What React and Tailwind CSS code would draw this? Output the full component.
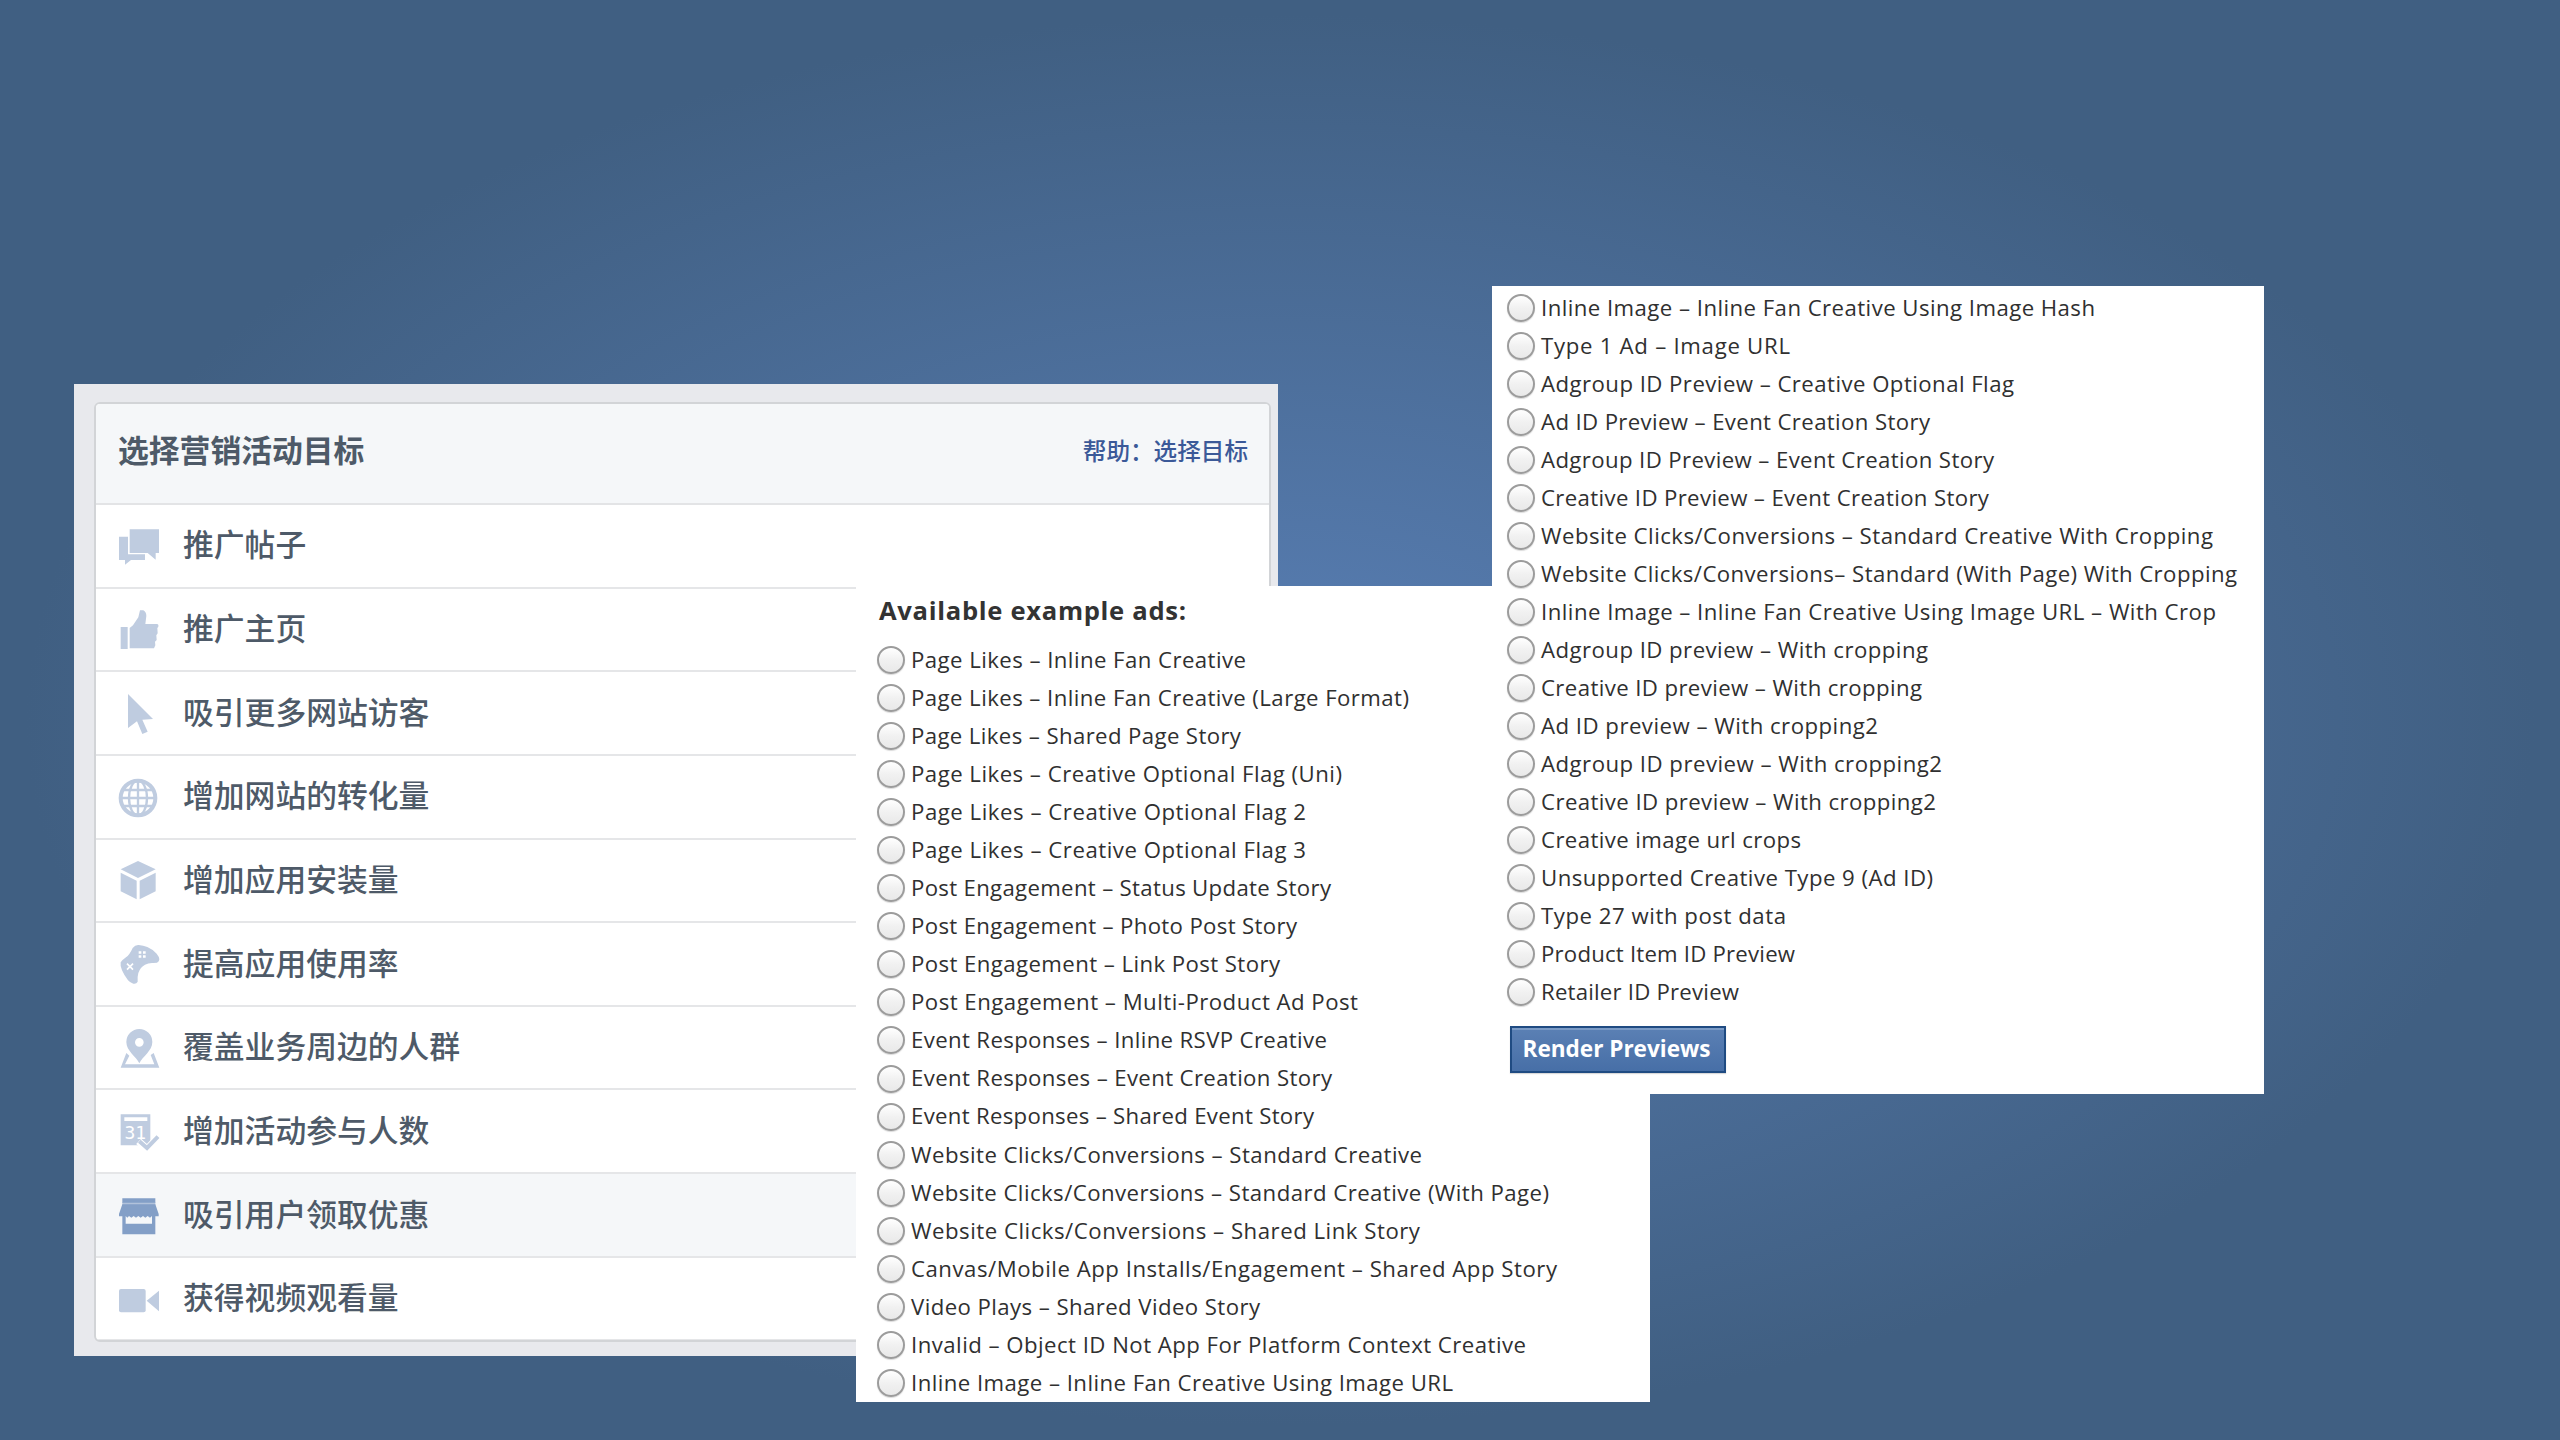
import { useLayoutEffect, useRef, useState } from "react";

/* Text tracked out so that its line is exactly `w` pixels wide. */
function Fit({ w, children }) {
  const ref = useRef(null);
  const [spacing, setSpacing] = useState(0);
  useLayoutEffect(() => {
    const natural = ref.current.getBoundingClientRect().width;
    setSpacing((w - natural) / (children.length - 1));
  }, []);
  return (
    <span ref={ref} className="whitespace-pre" style={{ letterSpacing: spacing }}>
      {children}
    </span>
  );
}

const icons = {
  posts: (
    <>
      <path d="M3 35H30V88H81V105H39L21 119V105H3Z" />
      <path d="M35 13H123V84H113V104L89 84H35Z" />
    </>
  ),
  like: (
    <>
      <path d="M8 57H29V123H8Z" />
      <path d="M35 60L45 52L61 28L66 7H76Q85 12 85 24L82 48H118Q123 50 121 56L118 60L119 76L115 82L116 96L111 101L112 112L108 121H35Z" />
    </>
  ),
  cursor: <path d="M30 6L105 81L73 83L89 119L73 126L57 88L30 108Z" />,
  globe: (
    <g fill="none" stroke="currentColor" strokeWidth="7">
      <circle cx="60" cy="66" r="52" strokeWidth="12" />
      <ellipse cx="60" cy="66" rx="27" ry="52" />
      <path d="M60 14V118M16 42H104M8 66H112M16 90H104" />
    </g>
  ),
  cube: <path d="M60 6L113 31L60 57L8 31ZM8 41L56 65V121L8 97ZM113 41L65 65V121L113 97Z" />,
  gamepad: (
    <>
      <path d="M44 15Q52 5 62 6Q76 7 88 12Q106 20 116 32Q123 40 124 49Q124 56 117 59L106 60Q92 59 81 65Q67 72 61 90Q58 100 59 116Q55 124 46 122Q37 120 30 112Q18 96 12 82Q6 68 8 58Q14 50 24 43Q34 37 44 15Z" />
      <path
        fill="#fff"
        d="M62 25H70V32H62ZM75 25H83V32H75ZM62 37H70V44H62ZM75 37H83V44H75Z"
      />
      <path d="M27 62L45 80M45 62L27 80" stroke="#fff" strokeWidth="5" />
    </>
  ),
  pin: (
    <>
      <path
        fillRule="evenodd"
        d="M64 109C54 88 25 72 25 45A39 39 0 0 1 103 45C103 72 74 88 64 109ZM64 33A13 13 0 1 0 64 59A13 13 0 1 0 64 33Z"
      />
      <path d="M25 78L8 122H124L107 78L98 84L109 112H21L34 86Z" />
    </>
  ),
  calendar: (
    <>
      <path fillRule="evenodd" d="M8 13H97V106H8ZM19 22V33H88V22Z" />
      <text
        x="52"
        y="87"
        fill="#fff"
        textAnchor="middle"
        fontSize="54"
        fontFamily="DejaVu Sans Mono"
      >
        31
      </text>
      <path d="M62 94L87 117L123 80" fill="none" stroke="#fff" strokeWidth="22" />
      <path d="M64 94L87 114L120 80" fill="none" stroke="currentColor" strokeWidth="12" />
    </>
  ),
  store: (
    <>
      <path opacity=".6" d="M13 24H112V34H13Z" />
      <path d="M13 13H112V26H13Z" />
      <path
        fillRule="evenodd"
        d="M13 31H112L122 60V67H112V121H13V67H3V60ZM23 66V89H102V66L96 71L89 66L82 71L75 66L68 71L61 66L54 71L47 66L40 71L33 66L28 71Z"
      />
    </>
  ),
  video: (
    <>
      <rect x="3" y="33" width="80" height="70" rx="6" />
      <path d="M86 68L123 38V100Z" />
    </>
  ),
};

const goals = [
  ["posts", "推广帖子"],
  ["like", "推广主页"],
  ["cursor", "吸引更多网站访客"],
  ["globe", "增加网站的转化量"],
  ["cube", "增加应用安装量"],
  ["gamepad", "提高应用使用率"],
  ["pin", "覆盖业务周边的人群"],
  ["calendar", "增加活动参与人数"],
  ["store", "吸引用户领取优惠"],
  ["video", "获得视频观看量"],
];

const leftAds = [
  ["Page Likes – Inline Fan Creative", 335],
  ["Page Likes – Inline Fan Creative (Large Format)", 498],
  ["Page Likes – Shared Page Story", 330],
  ["Page Likes – Creative Optional Flag (Uni)", 431],
  ["Page Likes – Creative Optional Flag 2", 395],
  ["Page Likes – Creative Optional Flag 3", 395],
  ["Post Engagement – Status Update Story", 420],
  ["Post Engagement – Photo Post Story", 386],
  ["Post Engagement – Link Post Story", 369],
  ["Post Engagement – Multi-Product Ad Post", 447],
  ["Event Responses – Inline RSVP Creative", 416],
  ["Event Responses – Event Creation Story", 421],
  ["Event Responses – Shared Event Story", 403],
  ["Website Clicks/Conversions – Standard Creative", 511],
  ["Website Clicks/Conversions – Standard Creative (With Page)", 638],
  ["Website Clicks/Conversions – Shared Link Story", 509],
  ["Canvas/Mobile App Installs/Engagement – Shared App Story", 646],
  ["Video Plays – Shared Video Story", 349],
  ["Invalid – Object ID Not App For Platform Context Creative", 615],
  ["Inline Image – Inline Fan Creative Using Image URL", 542],
];

const rightAds = [
  ["Inline Image – Inline Fan Creative Using Image Hash", 554],
  ["Type 1 Ad – Image URL", 249],
  ["Adgroup ID Preview – Creative Optional Flag", 473],
  ["Ad ID Preview – Event Creation Story", 389],
  ["Adgroup ID Preview – Event Creation Story", 453],
  ["Creative ID Preview – Event Creation Story", 448],
  ["Website Clicks/Conversions – Standard Creative With Cropping", 672],
  ["Website Clicks/Conversions– Standard (With Page) With Cropping", 696],
  ["Inline Image – Inline Fan Creative Using Image URL – With Crop", 675],
  ["Adgroup ID preview – With cropping", 387],
  ["Creative ID preview – With cropping", 381],
  ["Ad ID preview – With cropping2", 337],
  ["Adgroup ID preview – With cropping2", 401],
  ["Creative ID preview – With cropping2", 395],
  ["Creative image url crops", 260],
  ["Unsupported Creative Type 9 (Ad ID)", 392],
  ["Type 27 with post data", 245],
  ["Product Item ID Preview", 254],
  ["Retailer ID Preview", 198],
];

function Ads({ items }) {
  return (
    <ul className="flex flex-col">
      {items.map(([label, w]) => (
        <li
          key={label}
          className="flex h-[38.06px] items-center text-[22.2px] leading-none font-medium text-[#303030]"
        >
          <span className="mr-[6px] size-7 shrink-0 rounded-full border-2 border-[#9c9c9c] bg-linear-to-b from-white via-[#f1f1f1] to-[#e9e9e9] shadow-[0_1px_1px_rgba(0,0,0,0.15)]" />
          <Fit w={w}>{label}</Fit>
        </li>
      ))}
    </ul>
  );
}

export default function App() {
  return (
    <main className="relative h-[1440px] w-[2560px] overflow-hidden bg-[radial-gradient(ellipse_farthest-side_at_center,#597fb5_0%,#405f82_98%)] font-['Open_Sans','Noto_Sans_CJK_SC',sans-serif]">
      <section className="absolute top-[384px] left-[74px] h-[972px] w-[1204px] bg-[#e8e9ed] pt-[18px] pl-5 font-['Noto_Sans_CJK_SC',sans-serif]">
        <div className="h-[940px] w-[1177px] overflow-hidden rounded-md border-2 border-[#d2d4d7] bg-white">
          <header className="flex h-[101px] items-center justify-between border-b-2 border-[#e3e4e6] bg-[#f5f7f9] pr-[21px] pb-[7px] pl-[22px]">
            <h1 className="pb-px text-[30.8px] leading-none font-bold text-[#4e5a68]">选择营销活动目标</h1>
            <a className="pt-px text-[23.6px] leading-none font-medium text-[#3b5998]">帮助：选择目标</a>
          </header>
          <ul>
            {goals.map(([icon, label]) => (
              <li
                key={icon}
                className={
                  "flex h-[83.65px] items-center border-b-2 border-[#e5e6e8] pl-[22px] " +
                  (icon === "store" ? "bg-[#f5f7f9] text-[#839fc7]" : "text-[#bfcce0]")
                }
              >
                <svg viewBox="0 0 126 126" className="size-[42px]" fill="currentColor">
                  {icons[icon]}
                </svg>
                <span className="mb-1 ml-[23px] text-[30.8px] leading-none font-medium text-[#4e5a68]">
                  {label}
                </span>
              </li>
            ))}
          </ul>
        </div>
      </section>

      <section className="absolute top-[586px] left-[856px] h-[816px] w-[794px] overflow-hidden bg-white pl-[21px]">
        <h2 className="flex h-[55px] items-center pb-[5px] pl-[2px] text-[25.6px] leading-none font-bold text-[#333]">
          <Fit w={307}>Available example ads:</Fit>
        </h2>
        <Ads items={leftAds} />
      </section>

      <section className="absolute top-[286px] left-[1492px] h-[808px] w-[772px] bg-white pt-[2.6px] pl-[15px]">
        <Ads items={rightAds} />
        <button className="mt-[14.4px] ml-[2.5px] flex h-[47px] w-[216px] items-center justify-center border-2 border-[#1f4b82] bg-linear-to-b from-[#5b80b4] to-[#476fa7] pr-[2px] pb-px text-[22.6px] leading-none font-bold text-white shadow-[inset_0_2px_0_#7b9bc6,0_1px_1px_rgba(0,0,0,0.15)]">
          <Fit w={188}>Render Previews</Fit>
        </button>
      </section>
    </main>
  );
}
